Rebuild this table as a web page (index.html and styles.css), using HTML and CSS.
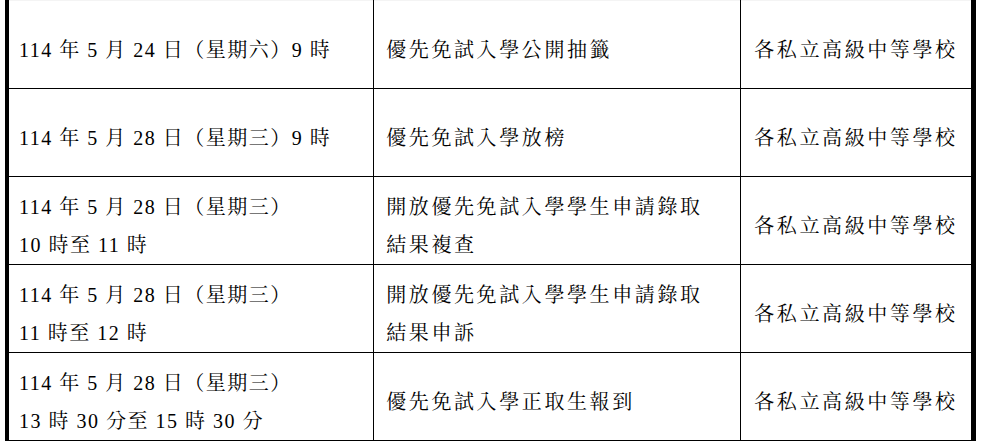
FILE: index.html
```html
<!DOCTYPE html>
<html lang="zh-Hant">
<head>
<meta charset="utf-8">
<link rel="stylesheet" href="styles.css">
</head>
<body>
<table class="schedule">
  <colgroup>
    <col class="c-date">
    <col class="c-item">
    <col class="c-org">
  </colgroup>
  <tbody>
    <tr class="first">
      <td class="date">114 年 5 月 24 日（星期六）9 時</td>
      <td class="item">優先免試入學公開抽籤</td>
      <td class="org">各私立高級中等學校</td>
    </tr>
    <tr>
      <td class="date">114 年 5 月 28 日（星期三）9 時</td>
      <td class="item">優先免試入學放榜</td>
      <td class="org">各私立高級中等學校</td>
    </tr>
    <tr>
      <td class="date">114 年 5 月 28 日（星期三）<br>10 時至 11 時</td>
      <td class="item">開放優先免試入學學生申請錄取<br>結果複查</td>
      <td class="org">各私立高級中等學校</td>
    </tr>
    <tr>
      <td class="date">114 年 5 月 28 日（星期三）<br>11 時至 12 時</td>
      <td class="item">開放優先免試入學學生申請錄取<br>結果申訴</td>
      <td class="org">各私立高級中等學校</td>
    </tr>
    <tr>
      <td class="date">114 年 5 月 28 日（星期三）<br>13 時 30 分至 15 時 30 分</td>
      <td class="item">優先免試入學正取生報到</td>
      <td class="org">各私立高級中等學校</td>
    </tr>
  </tbody>
</table>
</body>
</html>
```

FILE: styles.css
```css
html, body {
  margin: 0;
  padding: 0;
  background: #ffffff;
}

body {
  font-family: "Liberation Serif", "Noto Serif CJK TC", "Noto Sans CJK TC", serif;
  color: #000000;
  font-size: 20px;
}

.schedule {
  border-collapse: collapse;
  table-layout: fixed;
  width: 971px;
  margin: 0 0 0 5px;
  border-left: 4px solid #000;
  border-right: 5px solid #000;
}

.c-date { width: 365px; }
.c-item { width: 365px; }
.c-org { width: 232px; }

.schedule td {
  height: 88px;
  box-sizing: border-box;
  border: 1px solid #000;
  padding: 10px 0 0 0;
  vertical-align: middle;
  line-height: 38px;
  letter-spacing: 1.5px;
  white-space: nowrap;
}

.schedule .first td {
  border-top-color: #f4f4f4;
}

.schedule .date {
  padding-left: 10px;
}

.schedule .item {
  padding-left: 12px;
  letter-spacing: 2.6px;
}

.schedule .org {
  text-align: center;
  letter-spacing: 2.6px;
}
```
